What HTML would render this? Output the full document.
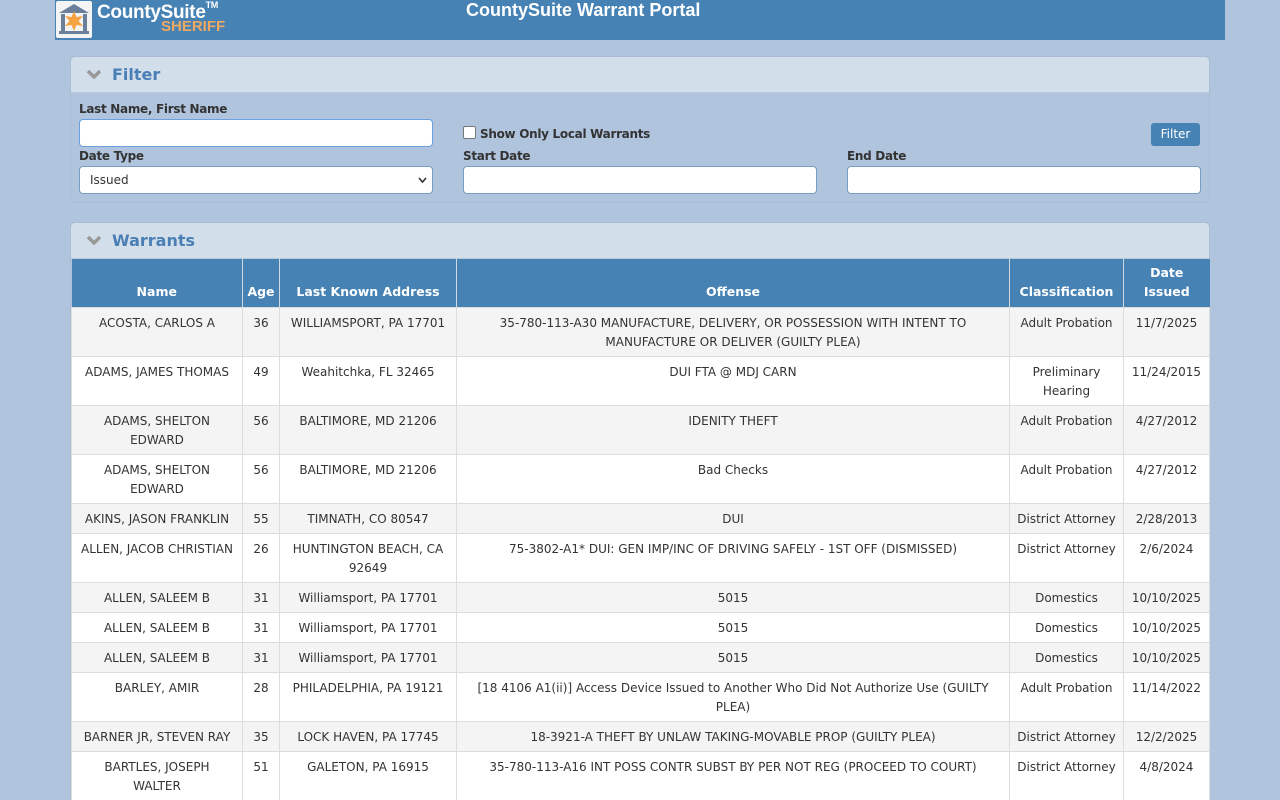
<!DOCTYPE html>
<html><head><meta charset="utf-8"><style>
*{box-sizing:border-box}
html,body{margin:0;width:1280px;height:800px;overflow:hidden}
body{background:#b0c4de;font-family:"DejaVu Sans","Liberation Sans",sans-serif;color:#333;position:relative}
.hdr{position:absolute;left:55px;top:0;width:1170px;height:40px;background:#4682b4}
.logo{position:absolute;left:1px;top:1px;width:36px;height:37px;background:#f4f4f4;border-radius:2px}
.brand{position:absolute;left:42px;top:2px;color:#fff;font:bold 19px "Liberation Sans",sans-serif;letter-spacing:-.3px}
.brand sup{font-size:9px;position:relative;top:-3px}
.sher{position:absolute;left:106px;top:18px;color:#f0a860;font:bold 15px "Liberation Sans",sans-serif}
.title{position:absolute;left:411px;top:0;color:#fff;font:bold 18px "Liberation Sans",sans-serif;white-space:nowrap}
.panel{position:absolute;left:70px;width:1140px;border:1px solid #a9bcd4;border-radius:4px;background:#b0c4de}
.ph{height:36px;background:#d3deeb;border-bottom:1px solid #b9c8da;border-radius:4px 4px 0 0;position:relative}
.ph span{position:absolute;left:41px;top:8px;color:#4a7fb5;font:bold 16px "DejaVu Sans",sans-serif}
.ph svg{position:absolute;left:15px;top:12px}
.lbl{position:absolute;font:bold 12px "DejaVu Sans",sans-serif;color:#333;letter-spacing:-.3px}
.inp{position:absolute;height:28px;background:#fff;border:1px solid #7a9cc4;border-radius:4px}
.btn{position:absolute;left:1151px;top:123px;width:49px;height:23px;background:#4682b4;border-radius:3px;color:#fff;font:12px "DejaVu Sans",sans-serif;text-align:center;line-height:23px}
table{position:absolute;left:71px;top:259px;border-collapse:collapse;width:1138px;table-layout:fixed;font-size:12px}
th{background:#4682b4;color:#fff;font-weight:bold;font-size:12.5px;vertical-align:bottom;padding:0 2px 6px;height:48px;border-left:1px solid #d0d8e2;line-height:19px}
td{text-align:center;vertical-align:top;padding:6px 4px 0;line-height:19px;border:1px solid #ddd;color:#333}
tr:nth-child(even) td{background:#f4f4f4}
tr:nth-child(odd) td{background:#fff}
</style></head><body>
<div class="hdr">
 <div class="logo"><svg width="36" height="37" viewBox="0 0 36 37"><path d="M3 12 L18 3 L33 12 Z" fill="#6a7f9a"/><rect x="5" y="13" width="4" height="17" fill="#6a7f9a"/><rect x="27" y="13" width="4" height="17" fill="#6a7f9a"/><rect x="3" y="30" width="30" height="3" fill="#6a7f9a"/><path d="M18 10 L20.5 16 L27 15 L22.5 20 L27 25 L20.5 24 L18 30 L15.5 24 L9 25 L13.5 20 L9 15 L15.5 16 Z" fill="#f4a340"/></svg></div>
 <div class="brand">CountySuite<sup>TM</sup></div>
 <div class="sher">SHERIFF</div>
 <div class="title">CountySuite Warrant Portal</div>
</div>
<div class="panel" style="top:56px;height:147px">
 <div class="ph"><svg width="16" height="10" viewBox="0 0 16 10"><path d="M2 2 L8 8 L14 2" stroke="#999" stroke-width="3.5" fill="none"/></svg><span>Filter</span></div>
</div>
<div class="lbl" style="left:79px;top:102px">Last Name, First Name</div>
<div class="inp" style="left:79px;top:119px;width:354px;border-color:#6aa0e0"></div>
<div style="position:absolute;left:463px;top:126px;width:13px;height:13px;background:#fff;border:1px solid #777;border-radius:2px"></div>
<div class="lbl" style="left:480px;top:127px">Show Only Local Warrants</div>
<div class="btn">Filter</div>
<div class="lbl" style="left:79px;top:149px">Date Type</div>
<div class="inp" style="left:79px;top:166px;width:354px;font-size:12px;padding:6px 10px;color:#333">Issued<svg style="position:absolute;right:5px;top:10px" width="9" height="7" viewBox="0 0 9 7"><path d="M1 1 L4.5 5 L8 1" stroke="#333" stroke-width="1.6" fill="none"/></svg></div>
<div class="lbl" style="left:463px;top:149px">Start Date</div>
<div class="inp" style="left:463px;top:166px;width:354px"></div>
<div class="lbl" style="left:847px;top:149px">End Date</div>
<div class="inp" style="left:847px;top:166px;width:354px"></div>
<div class="panel" style="top:222px;height:600px">
 <div class="ph"><svg width="16" height="10" viewBox="0 0 16 10"><path d="M2 2 L8 8 L14 2" stroke="#999" stroke-width="3.5" fill="none"/></svg><span>Warrants</span></div>
</div>
<table>
<colgroup><col style="width:171px"><col style="width:37px"><col style="width:177px"><col style="width:553px"><col style="width:114px"><col style="width:86px"></colgroup>
<tr><th style="border-left:0">Name</th><th>Age</th><th>Last Known Address</th><th>Offense</th><th>Classification</th><th>Date<br>Issued</th></tr>
<tr style="height:49px"><td>ACOSTA, CARLOS A</td><td>36</td><td>WILLIAMSPORT, PA 17701</td><td>35-780-113-A30 MANUFACTURE, DELIVERY, OR POSSESSION WITH INTENT TO MANUFACTURE OR DELIVER (GUILTY PLEA)</td><td>Adult Probation</td><td>11/7/2025</td></tr>
<tr style="height:49px"><td>ADAMS, JAMES THOMAS</td><td>49</td><td>Weahitchka, FL 32465</td><td>DUI FTA @ MDJ CARN</td><td>Preliminary Hearing</td><td>11/24/2015</td></tr>
<tr style="height:49px"><td>ADAMS, SHELTON EDWARD</td><td>56</td><td>BALTIMORE, MD 21206</td><td>IDENITY THEFT</td><td>Adult Probation</td><td>4/27/2012</td></tr>
<tr style="height:49px"><td>ADAMS, SHELTON EDWARD</td><td>56</td><td>BALTIMORE, MD 21206</td><td>Bad Checks</td><td>Adult Probation</td><td>4/27/2012</td></tr>
<tr style="height:30px"><td>AKINS, JASON FRANKLIN</td><td>55</td><td>TIMNATH, CO 80547</td><td>DUI</td><td>District Attorney</td><td>2/28/2013</td></tr>
<tr style="height:49px"><td>ALLEN, JACOB CHRISTIAN</td><td>26</td><td>HUNTINGTON BEACH, CA 92649</td><td>75-3802-A1* DUI: GEN IMP/INC OF DRIVING SAFELY - 1ST OFF (DISMISSED)</td><td>District Attorney</td><td>2/6/2024</td></tr>
<tr style="height:30px"><td>ALLEN, SALEEM B</td><td>31</td><td>Williamsport, PA 17701</td><td>5015</td><td>Domestics</td><td>10/10/2025</td></tr>
<tr style="height:30px"><td>ALLEN, SALEEM B</td><td>31</td><td>Williamsport, PA 17701</td><td>5015</td><td>Domestics</td><td>10/10/2025</td></tr>
<tr style="height:30px"><td>ALLEN, SALEEM B</td><td>31</td><td>Williamsport, PA 17701</td><td>5015</td><td>Domestics</td><td>10/10/2025</td></tr>
<tr style="height:49px"><td>BARLEY, AMIR</td><td>28</td><td>PHILADELPHIA, PA 19121</td><td>[18 4106 A1(ii)] Access Device Issued to Another Who Did Not Authorize Use (GUILTY PLEA)</td><td>Adult Probation</td><td>11/14/2022</td></tr>
<tr style="height:30px"><td>BARNER JR, STEVEN RAY</td><td>35</td><td>LOCK HAVEN, PA 17745</td><td>18-3921-A THEFT BY UNLAW TAKING-MOVABLE PROP (GUILTY PLEA)</td><td>District Attorney</td><td>12/2/2025</td></tr>
<tr style="height:49px"><td>BARTLES, JOSEPH<br>WALTER</td><td>51</td><td>GALETON, PA 16915</td><td>35-780-113-A16 INT POSS CONTR SUBST BY PER NOT REG (PROCEED TO COURT)</td><td>District Attorney</td><td>4/8/2024</td></tr>
</table>
</body></html>
